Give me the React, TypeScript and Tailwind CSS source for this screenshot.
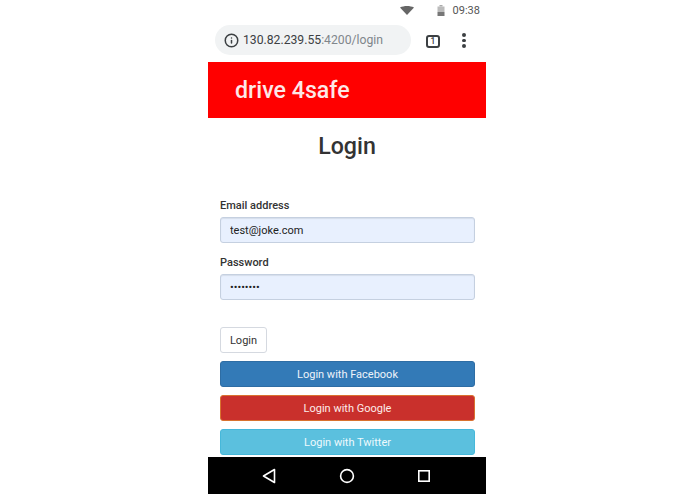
import React from "react";
import { Info } from "lucide-react";

const font = { fontFamily: "Roboto, sans-serif" };

const App: React.FC = () => {
	return (
		<div className="h-[494px] w-[695px] bg-white pl-[208px]" style={font}>
			<div className="flex h-[494px] w-[278px] flex-col overflow-hidden">
				{/* Status bar */}
				<div className="flex h-[20px] items-center justify-end pr-[6px] text-[11px] leading-none text-[#555]">
					<svg width="14" height="9" viewBox="0 0 14 9" className="mr-[23px]">
						<path d="M0 1.5 C4 -0.5 10 -0.5 14 1.5 L7 9 Z" fill="#666" />
					</svg>
					<svg width="8" height="11" viewBox="0 0 8 11" className="mr-[8px]">
						<rect x="2.5" y="0" width="3" height="1.5" fill="#aaa" />
						<rect x="0.5" y="1.5" width="7" height="5.5" fill="#bbb" />
						<rect x="0.5" y="7" width="7" height="4" fill="#777" />
					</svg>
					<span>09:38</span>
				</div>

				{/* Browser address bar */}
				<div className="flex h-[42px] items-start pt-[5px]">
					<div className="ml-[7px] flex h-[30px] w-[196px] items-center rounded-[15px] bg-[#f1f3f4] pl-[9px] text-[12.2px] leading-none">
						<Info size={15} strokeWidth={2.4} className="mr-[4px] text-[#3c4043]" />
						<span className="text-[#3c4043]">130.82.239.55</span>
						<span className="text-[#80868b]">:4200/login</span>
					</div>
					<div className="ml-[15px] mt-[10px] flex h-[13px] w-[14px] items-center justify-center rounded-[3px] border-2 border-[#3c4043] text-[8.5px] font-medium leading-none text-[#3c4043]">
						1
					</div>
					<div className="ml-[22px] mt-[8px] flex flex-col gap-[2px]">
						<span className="h-[3.5px] w-[3.5px] rounded-full bg-[#3c4043]" />
						<span className="h-[3.5px] w-[3.5px] rounded-full bg-[#3c4043]" />
						<span className="h-[3.5px] w-[3.5px] rounded-full bg-[#3c4043]" />
					</div>
				</div>

				{/* App header */}
				<div className="flex h-[56px] items-center bg-[#ff0000] pl-[27px] text-[23.2px] font-medium text-[#fde8e8]">
					drive 4safe
				</div>

				<h1 className="mt-[12px] text-center text-[23.2px] font-medium leading-[32px] text-[#333]">Login</h1>

				{/* Form */}
				<form className="mt-[35px] flex flex-col px-[12px]">
					<label className="pt-[1px] text-[11px] font-medium leading-[15px] text-[#333]">Email address</label>
					<input
						readOnly
						value="test@joke.com"
						className="mt-[4px] h-[26px] w-[255px] rounded-[3px] border border-[#c5d0e0] bg-[#e8f0fe] px-[9px] text-[11px] text-[#222] shadow-[inset_0_1px_1px_rgba(0,0,0,0.08)] outline-none"
					/>
					<label className="mt-[11px] pt-[1px] text-[11px] font-medium leading-[15px] text-[#333]">Password</label>
					<input
						readOnly
						type="password"
						value="testtest"
						className="mt-[4px] h-[26px] w-[255px] rounded-[3px] border border-[#c5d0e0] bg-[#e8f0fe] px-[9px] text-[11px] text-[#222] shadow-[inset_0_1px_1px_rgba(0,0,0,0.08)] outline-none"
					/>
					<button
						type="button"
						className="mt-[27px] h-[26px] w-[47px] rounded-[3px] border border-[#d5d9e0] bg-white pt-[2px] text-[11px] text-[#333]"
					>
						Login
					</button>
					<button
						type="button"
						className="mt-[8px] h-[26px] w-[255px] rounded-[3px] border border-[#2e6da4] bg-[#337ab7] pt-[2px] text-[11px] text-[#eef4fa]"
					>
						Login with Facebook
					</button>
					<button
						type="button"
						className="mt-[8px] h-[26px] w-[255px] rounded-[3px] border border-[#d9722f] bg-[#c9302c] pt-[2px] text-[11px] text-[#fdecea]"
					>
						Login with Google
					</button>
					<button
						type="button"
						className="mt-[8px] h-[26px] w-[255px] rounded-[3px] border border-[#46b8da] bg-[#5bc0de] pt-[2px] text-[11px] text-[#eefafd]"
					>
						Login with Twitter
					</button>
				</form>

				{/* Android nav bar */}
				<div className="mt-auto flex h-[37px] shrink-0 items-center bg-black pl-[54px] text-white">
					<svg width="14" height="16" viewBox="0 0 14 16" className="mr-[63px]">
						<path d="M12.5 1.5 L1.5 8 L12.5 14.5 Z" fill="none" stroke="#fff" strokeWidth="1.6" strokeLinejoin="round" />
					</svg>
					<svg width="16" height="16" viewBox="0 0 16 16" className="mr-[62px]">
						<circle cx="8" cy="8" r="6.4" fill="none" stroke="#fff" strokeWidth="1.6" />
					</svg>
					<svg width="14" height="14" viewBox="0 0 14 14">
						<rect x="1.8" y="1.8" width="10.4" height="10.4" fill="none" stroke="#fff" strokeWidth="1.6" />
					</svg>
				</div>
			</div>
		</div>
	);
};

export default App;
